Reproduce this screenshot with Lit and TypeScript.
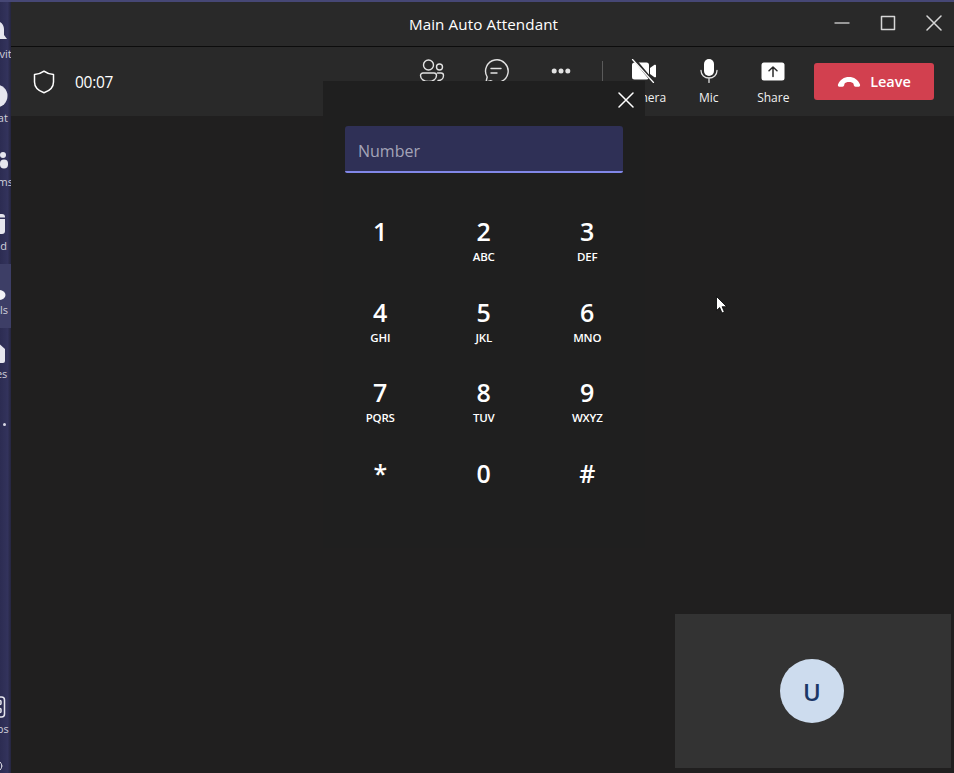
import { LitElement, html, css, svg } from "lit";
import { customElement } from "lit/decorators.js";

const ic = (w: number, h: number, vb: string, body: unknown) =>
  html`<svg width=${w} height=${h} viewBox=${vb} fill="none" stroke="currentColor" stroke-linecap="round" stroke-linejoin="round">${body}</svg>`;

const icons = {
  bell: ic(24, 24, "0 0 24 24", svg`<path fill="#e6e6ee" stroke="none" d="M12 1c-5 0-8 4-8 8v6l-3 4h22l-3-4V9c0-4-3-8-8-8z"/>`),
  chatBubble: ic(24, 24, "0 0 24 24", svg`<circle cx="12" cy="12" r="11.500" fill="#e6e6ee" stroke="none"/>`),
  teams: ic(24, 20, "0 0 24 20", svg`<circle cx="8" cy="4" r="4" fill="#e6e6ee" stroke="none"/><rect x="2" y="9" width="12" height="10" rx="5" fill="#e6e6ee" stroke="none"/><circle cx="19" cy="5" r="3" fill="#e6e6ee" stroke="none"/><rect x="16" y="9.500" width="8" height="9" rx="4" fill="#e6e6ee" stroke="none"/>`),
  find: ic(24, 20, "0 0 24 20", svg`<path fill="#e6e6ee" stroke="none" d="M3 3a3 3 0 0 1 3-3h12a3 3 0 0 1 3 3v14a3 3 0 0 1-3 3H6a3 3 0 0 1-3-3z"/><rect x="3" y="3.500" width="18" height="1.500" fill="#34345c" stroke="none"/><circle cx="14" cy="11" r="1.500" fill="#34345c" stroke="none"/>`),
  calls: ic(24, 24, "0 0 24 24", svg`<ellipse cx="15" cy="19" rx="6.500" ry="5" fill="#f2f2f6" stroke="none"/>`),
  files: ic(24, 22, "0 0 24 22", svg`<path fill="#e6e6ee" stroke="none" d="M3 8l9-8 9 8v12a2 2 0 0 1-2 2H5a2 2 0 0 1-2-2z"/>`),
  apps: ic(24, 22, "0 0 24 22", svg`<rect x="3.500" y="1" width="17" height="20" rx="3" stroke="#e6e6ee" stroke-width="1.500"/><rect x="7" y="4.500" width="4" height="4" rx="1" stroke="#e6e6ee" stroke-width="1.500"/><rect x="13" y="4.500" width="4" height="4" rx="1" stroke="#e6e6ee" stroke-width="1.500"/><rect x="7" y="12.500" width="4" height="4" rx="1" stroke="#e6e6ee" stroke-width="1.500"/><rect x="13" y="12.500" width="4" height="4" rx="1" stroke="#e6e6ee" stroke-width="1.500"/>`),
  help: ic(24, 24, "0 0 24 24", svg`<circle cx="12" cy="12" r="10" stroke="#e6e6ee" stroke-width="1.500"/>`),
  shield: ic(22, 24, "0 0 22 24", svg`<path stroke-width="1.500" d="M11 1.200c2.500 2 5.500 3 9.500 3.300v7.500c0 5-3.800 8.800-9.500 10.800C5.300 20.800 1.500 17 1.500 12V4.500C5.500 4.200 8.500 3.200 11 1.200z"/>`),
  people: ic(26, 24, "0 0 26 24", svg`<g stroke-width="1.400"><circle cx="9.500" cy="6" r="5"/><circle cx="20.500" cy="8" r="3"/><path d="M4 14h11a2.500 2.500 0 0 1 2.500 2.500c0 3.500-3.500 6-8 6s-8-2.500-8-6A2.500 2.500 0 0 1 4 14z"/><path d="M18.500 14h3.500a2.500 2.500 0 0 1 2.500 2.500c0 3-2.500 5-5.500 5"/></g>`),
  chat: ic(26, 24, "0 0 26 24", svg`<g stroke-width="1.400"><path d="M3 23l1.200-5A11.300 11.300 0 1 1 8 21.800z"/><path d="M8 9.500h10M8 14h6"/></g>`),
  dots: ic(20, 6, "0 0 20 6", svg`<g fill="currentColor" stroke="none"><circle cx="3.200" cy="3" r="2.500"/><circle cx="10" cy="3" r="2.500"/><circle cx="16.800" cy="3" r="2.500"/></g>`),
  camOff: ic(26, 24, "0 0 26 24", svg`<path fill="#fff" stroke="none" d="M3.500 3.500h12A2.500 2.500 0 0 1 18 6v12a2.500 2.500 0 0 1-2.500 2.500h-12A2.500 2.500 0 0 1 1 18V6a2.500 2.500 0 0 1 2.500-2.500z"/><path fill="#fff" stroke="none" d="M19 9l4.500-3.200c.6-.4 1.500 0 1.500.8v10.800c0 .8-.9 1.200-1.500.8L19 15z"/><path stroke="#2a2a2a" stroke-width="3" d="M3 0l20 24"/><path stroke="#fff" stroke-width="1.200" d="M1.500 0.500l21 23"/>`),
  mic: ic(18, 24, "0 0 18 24", svg`<rect x="4" y="0" width="10" height="17" rx="5" fill="#fff" stroke="none"/><path stroke-width="1.300" d="M1 11.500c0 4.500 3.500 7.500 8 7.500s8-3 8-7.500M9 19v4.500"/>`),
  share: ic(24, 19, "0 0 24 19", svg`<rect x="0.500" y="0.500" width="23" height="18" rx="2.500" fill="#fff" stroke="none"/><path stroke="#2a2a2a" stroke-width="1.500" d="M12 14.500V5M8 8.800L12 5l4 3.800"/>`),
  hang: ic(24, 12, "0 0 24 12", svg`<path fill="#fff" stroke="none" d="M1 8.500C3 3.500 7 1 12 1s9 2.500 11 7.500c.4 1.200-.2 2.200-1.200 2.200h-3.300c-.9 0-1.500-.5-1.700-1.400l-.3-1.500C16 6.500 14 6 12 6s-4 .5-4.500 1.800l-.3 1.500c-.2.900-.8 1.400-1.700 1.400H2.200C1.200 10.700.6 9.700 1 8.500z"/>`),
  close: ic(16, 16, "0 0 16 16", svg`<path stroke-width="1.500" d="M1 1l14 14M15 1L1 15"/>`),
  min: ic(16, 16, "0 0 16 16", svg`<path stroke-width="1.300" stroke-linecap="butt" d="M0.500 8h15"/>`),
  max: ic(16, 16, "0 0 16 16", svg`<rect x="1.500" y="1.500" width="13" height="13" stroke-width="1.500"/>`),
  cursor: html`<svg width="12" height="19" viewBox="0 0 12 19"><path fill="#fff" stroke="#000" stroke-width="0.800" d="M0.500 0.500v14l3.200-3 2.300 5.500 2.400-1-2.300-5.300h4.600z"/></svg>`,
};

const rail = [
  { icon: icons.bell, label: "Activity", long: true },
  { icon: icons.chatBubble, label: "Chat" },
  { icon: icons.teams, label: "Teams" },
  { icon: icons.find, label: "Find" },
  { icon: icons.calls, label: "Calls", active: true },
  { icon: icons.files, label: "Files" },
];

const tools = [{ icon: icons.people }, { icon: icons.chat }, { icon: icons.dots }];
const devices = [
  { icon: icons.camOff, label: "Camera" },
  { icon: icons.mic, label: "Mic" },
  { icon: icons.share, label: "Share" },
];

const keys = [
  ["1", ""], ["2", "ABC"], ["3", "DEF"],
  ["4", "GHI"], ["5", "JKL"], ["6", "MNO"],
  ["7", "PQRS"], ["8", "TUV"], ["9", "WXYZ"],
  ["*", ""], ["0", ""], ["#", ""],
];

@customElement("app-root")
export class AppRoot extends LitElement {
  static styles = css`
    :host {
      display: block;
      width: 954px;
      height: 773px;
      overflow: hidden;
      font-family: "Open Sans", "Noto Sans", sans-serif;
      color: #fff;
      background: #2f2f56;
    }
    .frame { display: flex; flex-direction: column; height: 100%; position: relative; }
    .accent { height: 2px; background: #464775; flex: none; }
    .body { flex: 1; display: flex; min-height: 0; }

    .rail {
      width: 11px;
      flex: none;
      overflow: hidden;
      display: flex;
      flex-direction: column;
      padding-top: 6px;
      background: linear-gradient(90deg, #2c2c52, #33335c 70%, #25253f);
    }
    .rail-item {
      height: 64px;
      flex: none;
      width: 11px;
      display: flex;
      justify-content: flex-end;
    }
    .rail-item.active { background: #3d3e66; }
    .rail-item.dots { align-items: center; justify-content: flex-start; padding-left: 3px; box-sizing: border-box; }
    .rail-dot { width: 3px; height: 3px; border-radius: 50%; background: #d8d8e4; }
    .rail-inner {
      width: 48px;
      flex: none;
      margin-right: -9px;
      display: flex;
      flex-direction: column;
      align-items: center;
      padding-top: 12px;
      box-sizing: border-box;
    }
    .rail-icon { height: 24px; display: flex; align-items: center; }
    .rail-label { font-size: 11px; line-height: 14px; color: #d0d0dc; margin-top: 3px; white-space: nowrap; }
    .rail-label.long { margin-left: 6px; }
    .rail-foot { margin-top: auto; }
    .rail-foot .rail-item:last-child { height: 26px; }

    .main { flex: 1; min-width: 0; display: flex; flex-direction: column; background: #201f1f; position: relative; }
    .title {
      height: 45px;
      flex: none;
      box-sizing: border-box;
      border-bottom: 1px solid #0c0c0c;
      background: #292929;
      position: relative;
      display: flex;
      align-items: center;
      justify-content: center;
      padding-left: 2px;
      font-size: 15.200px;
      letter-spacing: 0.1px;
    }
    .win { position: absolute; right: 12px; top: 13px; display: flex; gap: 30px; color: #d6d6d6; }
    .toolbar {
      height: 69px;
      flex: none;
      background: #292929;
      display: flex;
      align-items: center;
      padding: 0 20px 0 22px;
    }
    .timer { display: flex; align-items: center; gap: 20px; font-size: 15.500px; letter-spacing: -0.3px; }
    .timer svg { display: block; }
    .actions { margin-left: auto; display: flex; align-items: flex-start; align-self: flex-start; padding-top: 9px; }
    .tool {
      width: 64.500px;
      height: 54px;
      display: flex;
      flex-direction: column;
      align-items: center;
      color: #e2e2e2;
      font-size: 12px;
    }
    .tool-icon { height: 30px; display: flex; align-items: center; justify-content: center; }
    .tool-label { line-height: 16px; margin-top: 4px; color: #f0f0f0; }
    .sep { width: 1px; height: 20px; background: #5a5a5a; margin: 5px 9px 0 9px; }
    .leave {
      width: 120px;
      height: 37px;
      box-sizing: border-box;
      margin: 7px 0 0 8.500px;
      border-radius: 3px;
      background: #d2404f;
      display: flex;
      align-items: center;
      justify-content: center;
      gap: 9px;
      font-size: 14.500px;
      font-weight: 600;
    }

    .dial {
      position: absolute;
      left: 312px;
      top: 79px;
      width: 322px;
      box-sizing: border-box;
      background: #1f1f1f;
      padding: 45px 5.500px 12px;
    }
    .dial-close { position: absolute; right: 11px; top: 10px; color: #fff; }
    .number {
      margin: 0 16.500px 0 16.500px;
      height: 47px;
      box-sizing: border-box;
      background: #2f3056;
      border-bottom: 2px solid #8187e8;
      border-radius: 3px 3px 2px 2px;
      display: flex;
      align-items: center;
      padding-left: 13px;
      padding-top: 4px;
      font-size: 16px;
      color: #a4a4b8;
    }
    .pad { display: grid; grid-template-columns: repeat(3, 103.500px); grid-auto-rows: 80.500px; margin-top: 41px; }
    .key { display: flex; flex-direction: column; align-items: center; }
    .digit { font-size: 25px; font-weight: 600; line-height: 34px; }
    .letters { font-size: 11.500px; font-weight: 600; line-height: 14px; margin-top: 2px; letter-spacing: -0.2px; }

    .self {
      position: absolute;
      right: 3px;
      bottom: 5px;
      width: 276px;
      height: 154px;
      box-sizing: border-box;
      padding-right: 2px;
      background: #333333;
      display: flex;
      align-items: center;
      justify-content: center;
    }
    .avatar {
      width: 64px;
      height: 64px;
      border-radius: 50%;
      background: #cddcee;
      color: #1a3766;
      font-size: 24px;
      font-weight: 600;
      display: flex;
      align-items: center;
      justify-content: center;
    }
    .pointer { position: absolute; left: 716px; top: 296px; line-height: 0; }
  `;

  render() {
    return html`
      <div class="frame">
        <div class="accent"></div>
        <div class="body">
          <nav class="rail">
            ${rail.map(
              (r) => html`<div class="rail-item ${r.active ? "active" : ""}">
                <div class="rail-inner"><div class="rail-icon">${r.icon}</div><span class="rail-label ${r.long ? "long" : ""}">${r.label}</span></div>
              </div>`
            )}
            <div class="rail-item dots"><span class="rail-dot"></span></div>
            <div class="rail-foot">
              <div class="rail-item"><div class="rail-inner"><div class="rail-icon">${icons.apps}</div><span class="rail-label">Apps</span></div></div>
              <div class="rail-item"><div class="rail-inner">${icons.help}</div></div>
            </div>
          </nav>
          <div class="main">
            <header class="title">
              Main Auto Attendant
              <div class="win">${icons.min}${icons.max}${icons.close}</div>
            </header>
            <div class="toolbar">
              <div class="timer">${icons.shield}<span>00:07</span></div>
              <div class="actions">
                ${tools.map((t) => html`<div class="tool"><div class="tool-icon">${t.icon}</div></div>`)}
                <div class="sep"></div>
                ${devices.map(
                  (t) => html`<div class="tool"><div class="tool-icon">${t.icon}</div><span class="tool-label">${t.label}</span></div>`
                )}
                <div class="leave">${icons.hang}<span>Leave</span></div>
              </div>
            </div>
            <section class="dial">
              <div class="dial-close">${icons.close}</div>
              <div class="number">Number</div>
              <div class="pad">
                ${keys.map(
                  ([d, l]) => html`<div class="key"><span class="digit">${d}</span>${l ? html`<span class="letters">${l}</span>` : ""}</div>`
                )}
              </div>
            </section>
            <aside class="self"><div class="avatar">U</div></aside>
          </div>
        </div>
        <div class="pointer">${icons.cursor}</div>
      </div>
    `;
  }
}
